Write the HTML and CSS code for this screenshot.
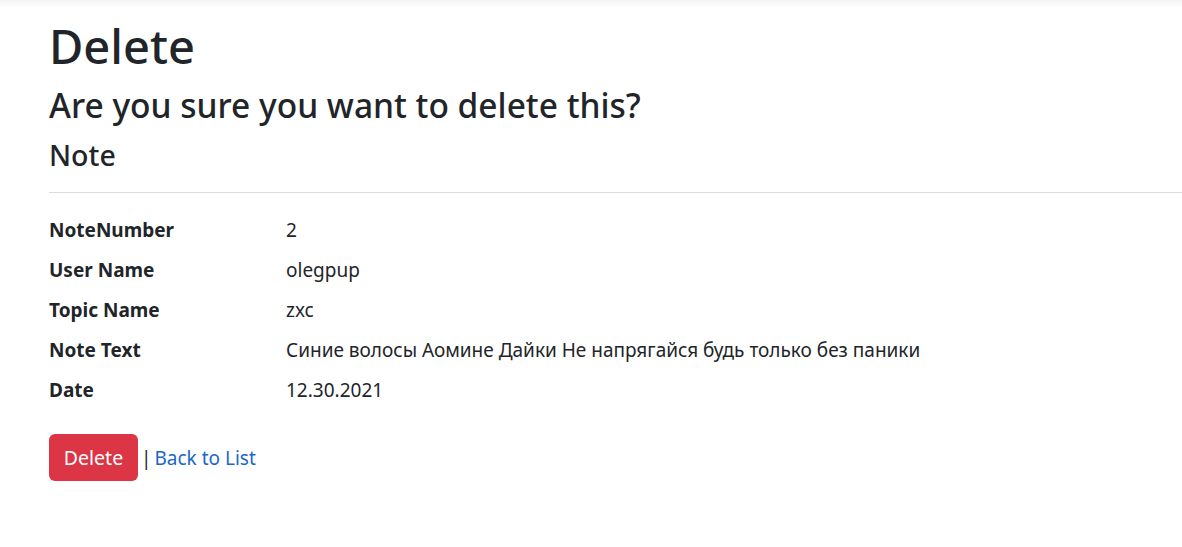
FILE: index.html
```html
<!DOCTYPE html>
<html lang="en">
<head>
<meta charset="utf-8">
<title>Delete</title>
<link rel="stylesheet" href="styles.css">
</head>
<body>
<div class="topshade"></div>
<main class="page">
  <h1 class="title">Delete</h1>
  <h3 class="question">Are you sure you want to delete this?</h3>
  <div class="note">
    <h4 class="note-title">Note</h4>
    <hr class="rule">
    <dl class="details">
      <dt>NoteNumber</dt>
      <dd>2</dd>
      <dt>User Name</dt>
      <dd>olegpup</dd>
      <dt>Topic Name</dt>
      <dd>zxc</dd>
      <dt>Note Text</dt>
      <dd>Синие волосы Аомине Дайки Не напрягайся будь только без паники</dd>
      <dt>Date</dt>
      <dd>12.30.2021</dd>
    </dl>
    <form class="actions">
      <button type="button" class="btn-danger">Delete</button>
      <span class="sep">|</span>
      <a href="#" class="link">Back to List</a>
    </form>
  </div>
</main>
</body>
</html>
```
FILE: styles.css
```css
html, body {
  margin: 0;
  padding: 0;
  background: #fff;
}
body {
  font-family: "Noto Sans", "Open Sans", sans-serif;
  color: #212529;
  font-size: 19px;
}
.topshade {
  height: 8px;
  background: linear-gradient(#f4f4f4, #fbfbfb 70%, #fff);
}
.page {
  padding: 9px 0 0 49px;
}
.title {
  margin: 0;
  font-size: 47px;
  line-height: 58px;
  font-weight: 500;
}
.question {
  margin: 9px 0 0;
  font-size: 33.5px;
  line-height: 42px;
  font-weight: 500;
}
.note-title {
  margin: 11px 0 0;
  font-size: 28.5px;
  line-height: 36px;
  font-weight: 500;
}
.rule {
  margin: 19px 0 0;
  border: 0;
  border-top: 1px solid #dcdcdc;
  height: 0;
}
.details {
  margin: 23px 0 0;
  display: grid;
  grid-template-columns: 237px 1fr;
  row-gap: 12px;
  line-height: 28px;
}
.details dt {
  font-weight: 700;
  margin: 0;
}
.details dd {
  margin: 0;
}
.actions {
  margin: 30px 0 0;
  display: flex;
  align-items: center;
}
.btn-danger {
  font: inherit;
  font-size: 19.5px;
  color: #fff;
  background: #dc3545;
  border: 0;
  border-radius: 6px;
  height: 47px;
  width: 89px;
  padding: 0;
  line-height: 28px;
}
.sep {
  margin-left: 3px;
  color: #212529;
}
.link {
  margin-left: 3px;
  color: #1b66c9;
  text-decoration: none;
}
```
